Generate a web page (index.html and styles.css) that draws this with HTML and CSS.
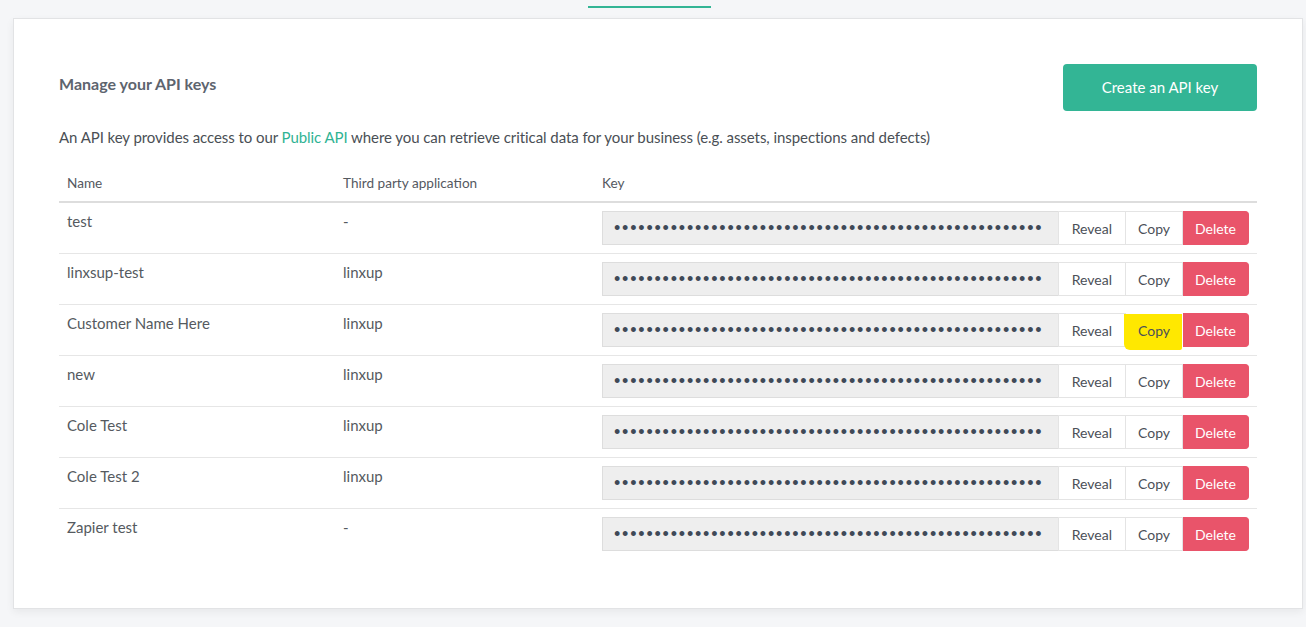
FILE: index.html
```html
<!DOCTYPE html>
<html lang="en">
<head>
<meta charset="utf-8">
<title>API keys</title>
<link rel="stylesheet" href="styles.css">
</head>
<body>
<div class="tabs"><span class="tab-active"></span></div>
<main class="card">
  <div class="card-head">
    <h2 class="title">Manage your API keys</h2>
    <button class="btn-create">Create an API key</button>
  </div>
  <p class="desc">An API key provides access to our <a href="#" class="link">Public API</a> where you can retrieve critical data for your business (e.g. assets, inspections and defects)</p>
  <table class="keys">
    <colgroup><col class="c-name"><col class="c-app"><col class="c-key"></colgroup>
    <thead>
      <tr><th>Name</th><th>Third party application</th><th>Key</th></tr>
    </thead>
    <tbody>
      <tr><td>test</td><td>-</td><td><div class="key-group"><span class="key-val">•••••••••••••••••••••••••••••••••••••••••••••••••••••</span><button class="kb rev">Reveal</button><button class="kb">Copy</button><button class="kb del">Delete</button></div></td></tr>
      <tr><td>linxsup-test</td><td>linxup</td><td><div class="key-group"><span class="key-val">•••••••••••••••••••••••••••••••••••••••••••••••••••••</span><button class="kb rev">Reveal</button><button class="kb">Copy</button><button class="kb del">Delete</button></div></td></tr>
      <tr><td>Customer Name Here</td><td>linxup</td><td><div class="key-group"><span class="key-val">•••••••••••••••••••••••••••••••••••••••••••••••••••••</span><button class="kb rev">Reveal</button><button class="kb hl">Copy</button><button class="kb del">Delete</button></div></td></tr>
      <tr><td>new</td><td>linxup</td><td><div class="key-group"><span class="key-val">•••••••••••••••••••••••••••••••••••••••••••••••••••••</span><button class="kb rev">Reveal</button><button class="kb">Copy</button><button class="kb del">Delete</button></div></td></tr>
      <tr><td>Cole Test</td><td>linxup</td><td><div class="key-group"><span class="key-val">•••••••••••••••••••••••••••••••••••••••••••••••••••••</span><button class="kb rev">Reveal</button><button class="kb">Copy</button><button class="kb del">Delete</button></div></td></tr>
      <tr><td>Cole Test 2</td><td>linxup</td><td><div class="key-group"><span class="key-val">•••••••••••••••••••••••••••••••••••••••••••••••••••••</span><button class="kb rev">Reveal</button><button class="kb">Copy</button><button class="kb del">Delete</button></div></td></tr>
      <tr><td>Zapier test</td><td>-</td><td><div class="key-group"><span class="key-val">•••••••••••••••••••••••••••••••••••••••••••••••••••••</span><button class="kb rev">Reveal</button><button class="kb">Copy</button><button class="kb del">Delete</button></div></td></tr>
    </tbody>
  </table>
</main>
</body>
</html>
```
FILE: styles.css
```css
* { box-sizing: border-box; }
html, body { margin: 0; padding: 0; }
body {
  background: #f5f6f8;
  font-family: Lato, "Open Sans", sans-serif;
  color: #555a60;
  width: 1306px;
  height: 627px;
  overflow: hidden;
}
.tabs {
  height: 18px;
  padding-left: 588px;
  padding-top: 6px;
}
.tab-active {
  display: block;
  width: 123px;
  height: 2px;
  background: #33b595;
}
.card {
  margin-left: 13px;
  width: 1290px;
  height: 591px;
  background: #fff;
  border: 1px solid #e2e3e5;
  box-shadow: 0 3px 8px rgba(0, 0, 0, 0.06);
  padding: 45px 45px 0 45px;
}
.card-head {
  display: flex;
  justify-content: space-between;
  align-items: flex-start;
}
.title {
  margin: 0;
  padding-top: 9px;
  font-size: 16px;
  line-height: 22px;
  font-weight: 700;
  color: #5d646e;
}
.btn-create {
  width: 194px;
  height: 47px;
  border: none;
  border-radius: 4px;
  background: #33b595;
  color: #fff;
  font-family: Lato, sans-serif;
  font-size: 15px;
  padding: 0 0 2px 0;
}
.desc {
  margin: 16px 0 0 0;
  font-size: 15px;
  line-height: 21px;
  letter-spacing: -0.066px;
  color: #4a4f55;
}
.link { color: #2fb394; text-decoration: none; }
.keys {
  margin-top: 16px;
  width: 1198px;
  border-collapse: collapse;
  table-layout: fixed;
}
.c-name { width: 276px; }
.c-app { width: 259px; }
.c-key { width: 663px; }
.keys th {
  text-align: left;
  font-weight: 400;
  font-size: 13.6px;
  line-height: 20px;
  padding: 9px 8px 8px 8px;
  color: #55595f;
  border-bottom: 2px solid #dddddd;
}
.keys td {
  font-size: 15px;
  line-height: 21px;
  padding: 8px;
  vertical-align: top;
  color: #555a60;
  border-bottom: 1px solid #e6e6e6;
}
.keys tbody tr:last-child td { border-bottom: none; }
.key-group {
  display: flex;
  height: 34px;
}
.key-val {
  flex: 1;
  background: #eeeeee;
  border: 1px solid #dddddd;
  border-right: none;
  padding-left: 11px;
  font-family: "Liberation Sans", sans-serif;
  font-size: 18px;
  line-height: 32px;
  letter-spacing: 1.8px;
  color: #3f4957;
  overflow: hidden;
  white-space: nowrap;
}
.kb {
  position: relative;
  height: 34px;
  border: 1px solid #e4e4e4;
  border-left: none;
  background: #fff;
  font-family: Lato, sans-serif;
  font-size: 14px;
  color: #4b5058;
  padding: 0 12px;
}
.rev { border-left: 1px solid #e4e4e4; padding: 0 13px; }
.del {
  background: #e9546a;
  border-color: #e9546a;
  color: #fff;
  border-radius: 0 4px 4px 0;
}
.hl {
  background: transparent;
  border-color: transparent;
  z-index: 0;
  isolation: isolate;
}
.hl::before {
  content: "";
  position: absolute;
  left: -2px;
  right: 0;
  top: 0;
  bottom: -4px;
  background: #ffe800;
  z-index: -1;
  border-radius: 0 0 2px 6px;
}
```
